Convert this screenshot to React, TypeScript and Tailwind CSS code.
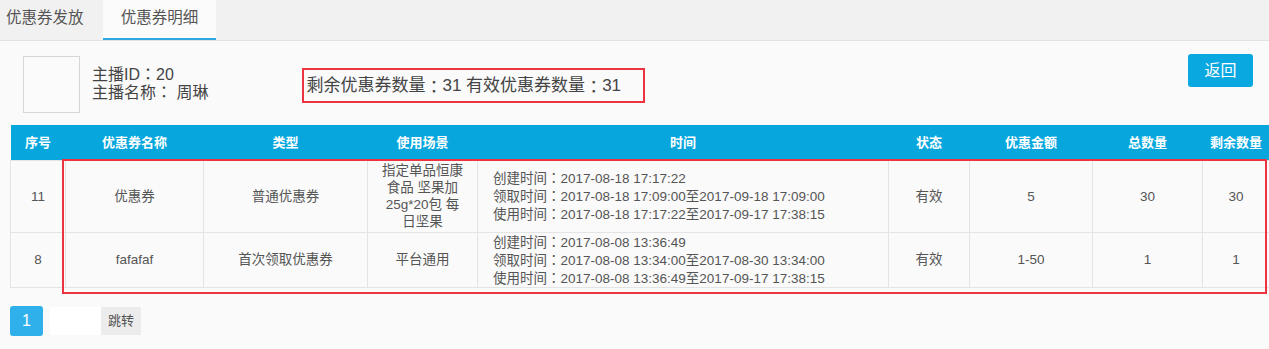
import React from 'react';

const cols = [
  { label: '序号', w: 'w-[55px]' },
  { label: '优惠券名称', w: 'w-[138px]' },
  { label: '类型', w: 'w-[164px]' },
  { label: '使用场景', w: 'w-[110px]' },
  { label: '时间', w: 'w-[411px]' },
  { label: '状态', w: 'w-[81px]' },
  { label: '优惠金额', w: 'w-[123px]' },
  { label: '总数量', w: 'w-[110px]' },
  { label: '剩余数量', w: 'w-[67px]' },
];

const rows = [
  {
    id: '11',
    name: '优惠券',
    type: '普通优惠券',
    scene: '指定单品恒康食品 坚果加25g*20包 每日坚果',
    times: ['创建时间：2017-08-18 17:17:22', '领取时间：2017-08-18 17:09:00至2017-09-18 17:09:00', '使用时间：2017-08-18 17:17:22至2017-09-17 17:38:15'],
    status: '有效',
    amount: '5',
    total: '30',
    left: '30',
    h: 'h-[72px]',
  },
  {
    id: '8',
    name: 'fafafaf',
    type: '首次领取优惠券',
    scene: '平台通用',
    times: ['创建时间：2017-08-08 13:36:49', '领取时间：2017-08-08 13:34:00至2017-08-30 13:34:00', '使用时间：2017-08-08 13:36:49至2017-09-17 17:38:15'],
    status: '有效',
    amount: '1-50',
    total: '1',
    left: '1',
    h: 'h-[53px]',
  },
];

// full-width colon drawn centred, as in the original font
const Txt = ({ s }: { s: string }) => (
  <>
    {s.split('：').map((part, i) => (
      <React.Fragment key={i}>
        {i > 0 && <span className="inline-block font-['Noto_Sans_CJK_TC',sans-serif]">：</span>}
        {part}
      </React.Fragment>
    ))}
  </>
);

const td = 'border border-[#e4e4e4] text-center align-middle p-0';

export default function App() {
  return (
    <div className="min-h-[349px] bg-[#fafafa] text-[#555] font-['Liberation_Sans','Noto_Sans_CJK_SC',sans-serif] overflow-hidden">
      {/* tabs */}
      <div className="flex h-[41px] bg-[#f1f1f1] border-b border-[#e2e2e2]">
        <div className="w-[103px] pl-[6px] pt-[7px] text-[15.5px] leading-[22px] text-[#555]">优惠券发放</div>
        <div className="w-[113px] bg-[#fbfbfb] border-b-2 border-[#2fa8df] flex justify-center pt-[7px] text-[15.5px] leading-[22px] text-[#555]">
          优惠券明细
        </div>
      </div>

      {/* anchor info */}
      <div className="flex items-start pl-[23px] pr-[16px] pt-[15px] h-[84px]">
        <div className="w-[57px] h-[57px] border border-[#d6d6d6] bg-[#fbfbfb]" />
        <div className="ml-[12px] mt-[9px] text-[16px] leading-[17px] text-[#444]">
          <div><Txt s="主播ID：20" /></div>
          <div><Txt s="主播名称： 周琳" /></div>
        </div>
        <div className="ml-[94px] mt-[12px] w-[343px] h-[35px] border-2 border-[#ee3340] flex items-center pl-[2px] text-[17px] text-[#444]">
          <Txt s="剩余优惠券数量：31 有效优惠券数量：31" />
        </div>
        <button className="ml-auto w-[65px] h-[33px] mt-[-2px] rounded-[3px] bg-[#0aa8e0] text-white text-[16px]">返回</button>
      </div>

      {/* table */}
      <div className="relative ml-[10px] w-[1259px]">
        <table className="w-[1259px] table-fixed border-collapse text-[13.5px] leading-[17px]">
          <thead>
            <tr className="h-[35px] bg-[#07a7de] text-white text-[13px]">
              {cols.map((c) => (
                <th key={c.label} className={`${c.w} text-center font-bold p-0`}>
                  {c.label}
                </th>
              ))}
            </tr>
          </thead>
          <tbody>
            {rows.map((r) => (
              <tr key={r.id} className={r.h}>
                <td className={td}>{r.id}</td>
                <td className={td}>{r.name}</td>
                <td className={td}>{r.type}</td>
                <td className={`${td} px-[13px]`}>{r.scene}</td>
                <td className={`${td} text-left pl-[15px]`}>
                  {r.times.map((t) => (
                    <div key={t}><Txt s={t} /></div>
                  ))}
                </td>
                <td className={td}>{r.status}</td>
                <td className={td}>{r.amount}</td>
                <td className={td}>{r.total}</td>
                <td className={td}>{r.left}</td>
              </tr>
            ))}
          </tbody>
        </table>
        {/* annotation box */}
        <div className="absolute left-[52px] top-[34px] w-[1205px] h-[135px] border-2 border-[#ee3340] pointer-events-none" />
      </div>

      {/* pager */}
      <div className="flex items-center pl-[10px] mt-[18px]">
        <div className="w-[33px] h-[30px] rounded-[3px] bg-[#2fb0ea] text-white text-[16px] flex items-center justify-center">1</div>
        <input className="ml-[7px] w-[51px] h-[28px] bg-white outline-none" />
        <button className="w-[40px] h-[28px] bg-[#ececec] text-[13px] text-[#555]">跳转</button>
      </div>
    </div>
  );
}
